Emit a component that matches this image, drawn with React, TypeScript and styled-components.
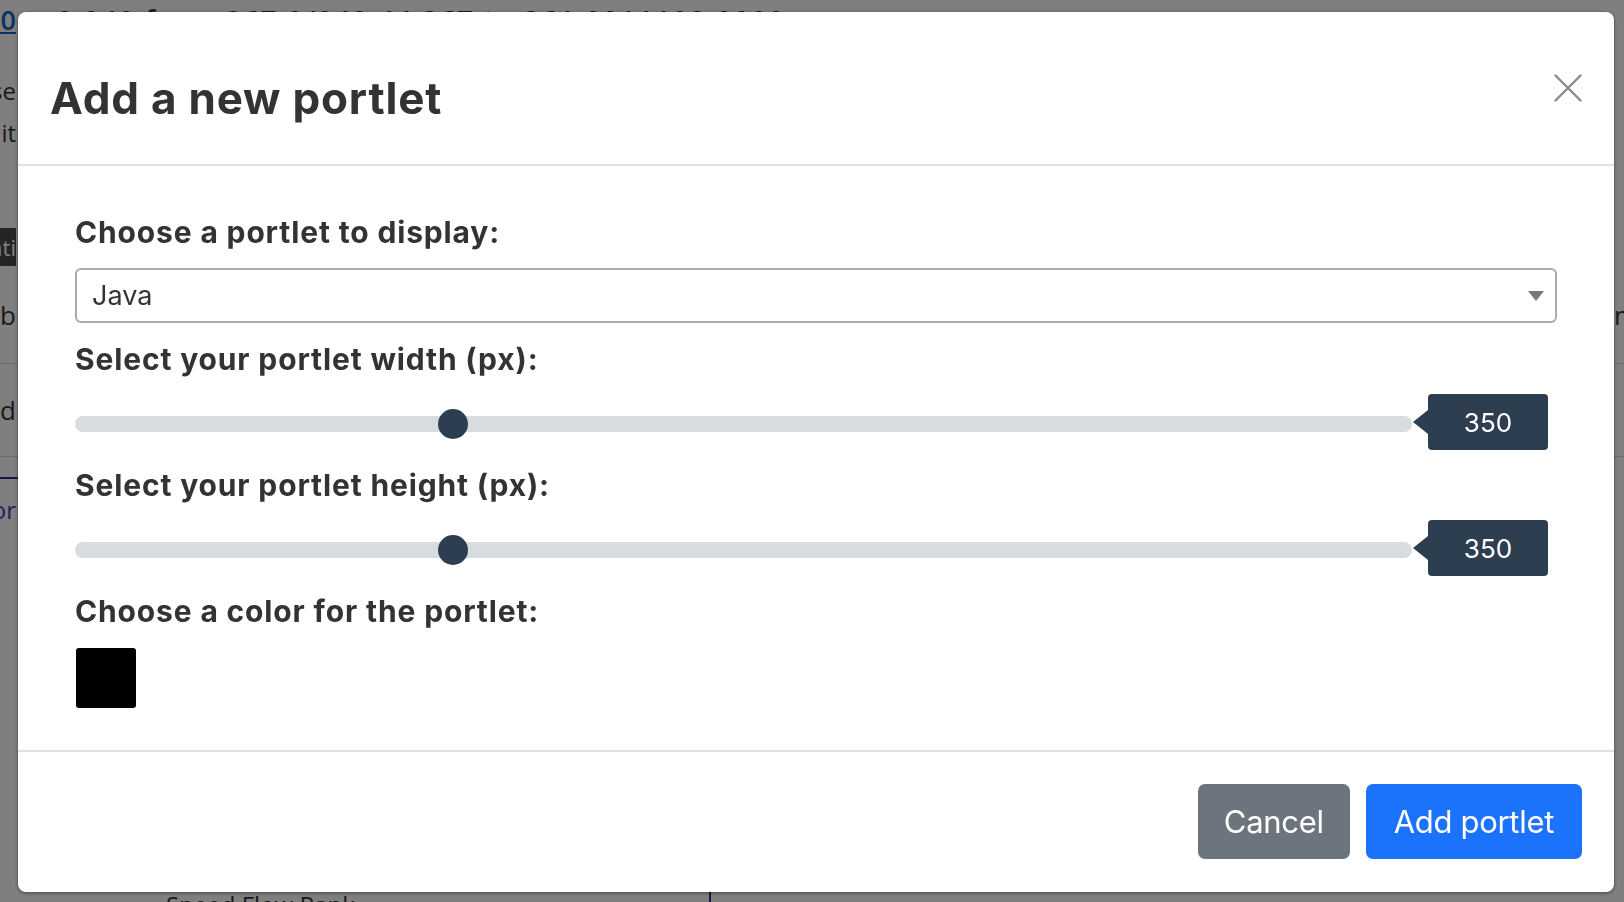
import styled, { createGlobalStyle } from "styled-components";

const GlobalStyle = createGlobalStyle`
    html, body {
        margin: 0;
        padding: 0;
        background: #fff;
    }
    * {
        box-sizing: border-box;
    }
`;

/* ---------- page behind the modal ---------- */

const Page = styled.div`
    height: 902px;
    display: flex;
    flex-direction: column;
    overflow: hidden;
    background: #fff;
    font-family: "Open Sans", "Liberation Sans", sans-serif;
    color: #333;
`;

const Clip = styled.div<{ $width?: number; $start?: boolean }>`
    width: ${(p) => p.$width ?? 16}px;
    flex-shrink: 0;
    display: flex;
    justify-content: ${(p) => (p.$start ? "flex-start" : "flex-end")};
    overflow: hidden;
    white-space: nowrap;
`;

const TopLine = styled.div`
    height: 40px;
    display: flex;
    align-items: flex-start;
    gap: 41px;
    padding-top: 2px;
    font-size: 27px;
    line-height: 36px;
    font-weight: 600;
`;

const PageLink = styled.a`
    color: #1565c0;
    text-decoration: underline;
`;

const Meta = styled.span`
    white-space: nowrap;
    letter-spacing: 2px;
`;

const Para = styled.div`
    margin-top: 30px;
    font-size: 24px;
    line-height: 42px;
`;

const DarkBar = styled.div`
    margin-top: 74px;
    height: 38px;
    width: 16px;
    display: flex;
    align-items: center;
    background: #4a4a4a;
    color: #fff;
    font-size: 22px;
`;

const TableRow = styled.div<{ $height: number }>`
    height: ${(p) => p.$height}px;
    display: flex;
    align-items: center;
    justify-content: space-between;
    border-bottom: 1px solid #d6d6d6;
    font-size: 26px;
`;

const TabLine = styled.div`
    width: 40px;
    height: 22px;
    border-bottom: 2px solid #3a2ca6;
`;

const TabText = styled.div`
    height: 60px;
    display: flex;
    align-items: center;
    color: #4b3cc6;
    font-size: 24px;
`;

const BottomRow = styled.div`
    margin-top: auto;
    height: 12px;
    display: grid;
    grid-template-columns: 543px 2px;
    padding-left: 166px;
    font-size: 24px;
    line-height: 30px;
`;

const BottomDivider = styled.div`
    background: #283499;
`;

/* ---------- modal ---------- */

const Overlay = styled.div`
    position: fixed;
    inset: 0;
    display: flex;
    padding: 12px 10px 10px 18px;
    background: rgba(0, 0, 0, 0.5);
    font-family: Inter, "Noto Sans", "Liberation Sans", sans-serif;
    color: #333;
`;

const Dialog = styled.div`
    flex: 1;
    display: flex;
    flex-direction: column;
    background: #fff;
    border-radius: 8px;
    box-shadow: 0 1px 3px 1px rgba(0, 0, 0, 0.3);
    overflow: hidden;
`;

const Header = styled.div`
    height: 154px;
    flex-shrink: 0;
    display: flex;
    justify-content: space-between;
    align-items: flex-start;
    padding: 0 32px;
    border-bottom: 2px solid #dee2e6;
`;

const Title = styled.h2`
    margin: 60px 0 0;
    font-size: 44px;
    line-height: 52px;
    font-weight: 700;
    letter-spacing: 0.8px;
`;

const CloseButton = styled.button`
    margin-top: 62px;
    width: 28px;
    height: 28px;
    padding: 0;
    border: 0;
    background: none;
    color: #8a8a8a;
    cursor: pointer;
    display: flex;
`;

const Body = styled.div`
    flex: 1;
    display: flex;
    flex-direction: column;
    gap: 17px;
    padding: 48px 57px 0;
`;

const Label = styled.label`
    font-size: 30px;
    line-height: 36px;
    font-weight: 700;
    letter-spacing: 0.85px;
`;

const SelectBox = styled.div`
    position: relative;
    height: 55px;
    margin: 1px 0;
    display: flex;
    align-items: center;
    justify-content: space-between;
    padding: 0 11px 0 15px;
    border: 2px solid #ababab;
    border-radius: 6px;
    font-size: 27px;
    color: #333;
`;

const Caret = styled.span`
    width: 0;
    height: 0;
    border-left: 8px solid transparent;
    border-right: 8px solid transparent;
    border-top: 10px solid #777;
`;

const SliderRow = styled.div`
    height: 56px;
    display: flex;
    align-items: center;
    padding: 0 9px 0 0;
`;

const Range = styled.input`
    flex: 1;
    -webkit-appearance: none;
    appearance: none;
    height: 16px;
    margin: 3px 0 0;
    border-radius: 8px;
    background: #d7dcdf;
    outline: none;

    &::-webkit-slider-thumb {
        -webkit-appearance: none;
        appearance: none;
        width: 30px;
        height: 30px;
        border: 0;
        border-radius: 50%;
        background: #2c3e50;
        cursor: pointer;
    }
`;

const ValueTag = styled.span`
    position: relative;
    width: 120px;
    height: 56px;
    margin-left: 16px;
    display: flex;
    align-items: center;
    justify-content: center;
    border-radius: 4px;
    background: #2c3e50;
    color: #fff;
    font-size: 26px;

    &::before {
        content: "";
        position: absolute;
        left: -15px;
        top: 50%;
        transform: translateY(-50%);
        border-top: 12px solid transparent;
        border-bottom: 12px solid transparent;
        border-right: 15px solid #2c3e50;
    }
`;

const Swatch = styled.div<{ $color: string }>`
    width: 60px;
    height: 60px;
    margin: 2px 0 0 1px;
    border-radius: 3px;
    background: ${(p) => p.$color};
`;

const Footer = styled.div`
    height: 142px;
    flex-shrink: 0;
    display: flex;
    justify-content: flex-end;
    align-items: flex-start;
    gap: 16px;
    padding: 32px 32px 0;
    border-top: 2px solid #dee2e6;
`;

const Button = styled.button<{ $variant: "secondary" | "primary" }>`
    height: 75px;
    padding: 0 ${(p) => (p.$variant === "primary" ? 28 : 26)}px;
    border: 0;
    border-radius: 7px;
    background: ${(p) => (p.$variant === "primary" ? "#1b73fb" : "#6c757d")};
    color: #fff;
    font-family: inherit;
    font-size: 31px;
    letter-spacing: -0.3px;
    cursor: pointer;
`;

const sliders = [
    { label: "Select your portlet width (px):", value: 350 },
    { label: "Select your portlet height (px):", value: 350 },
];

function App() {
    return (
        <>
            <GlobalStyle />
            <Page>
                <TopLine>
                    <Clip>
                        <PageLink>100</PageLink>
                    </Clip>
                    <Meta>0.949 from 367 0/949 44 367 to 361 0011102 0000</Meta>
                </TopLine>
                <Para>
                    <Clip>Please choose one of the options to use</Clip>
                    <Clip>and add the content to configure it</Clip>
                </Para>
                <DarkBar>
                    <Clip>Configurati</Clip>
                </DarkBar>
                <TableRow $height={98}>
                    <Clip>Kanb</Clip>
                    <Clip $width={10} $start>
                        mode
                    </Clip>
                </TableRow>
                <TableRow $height={93}>
                    <Clip>Speed</Clip>
                </TableRow>
                <TabLine />
                <TabText>
                    <Clip>Monitor</Clip>
                </TabText>
                <BottomRow>
                    <span>Speed Flow Rank</span>
                    <BottomDivider />
                </BottomRow>
            </Page>

            <Overlay>
                <Dialog>
                    <Header>
                        <Title>Add a new portlet</Title>
                        <CloseButton aria-label="Close">
                            <svg width="28" height="28" viewBox="0 0 28 28">
                                <path d="M1.5 1.5L26.5 26.5M26.5 1.5L1.5 26.5" stroke="currentColor" strokeWidth="2.4" strokeLinecap="round" />
                            </svg>
                        </CloseButton>
                    </Header>

                    <Body>
                        <Label>Choose a portlet to display:</Label>
                        <SelectBox>
                            <span>Java</span>
                            <Caret />
                        </SelectBox>

                        {sliders.map((s) => (
                            <div key={s.label} style={{ display: "contents" }}>
                                <Label>{s.label}</Label>
                                <SliderRow>
                                    <Range type="range" min={100} max={1000} defaultValue={s.value} />
                                    <ValueTag>{s.value}</ValueTag>
                                </SliderRow>
                            </div>
                        ))}

                        <Label>Choose a color for the portlet:</Label>
                        <Swatch $color="#000" />
                    </Body>

                    <Footer>
                        <Button $variant="secondary">Cancel</Button>
                        <Button $variant="primary">Add portlet</Button>
                    </Footer>
                </Dialog>
            </Overlay>
        </>
    );
}

export default App;
